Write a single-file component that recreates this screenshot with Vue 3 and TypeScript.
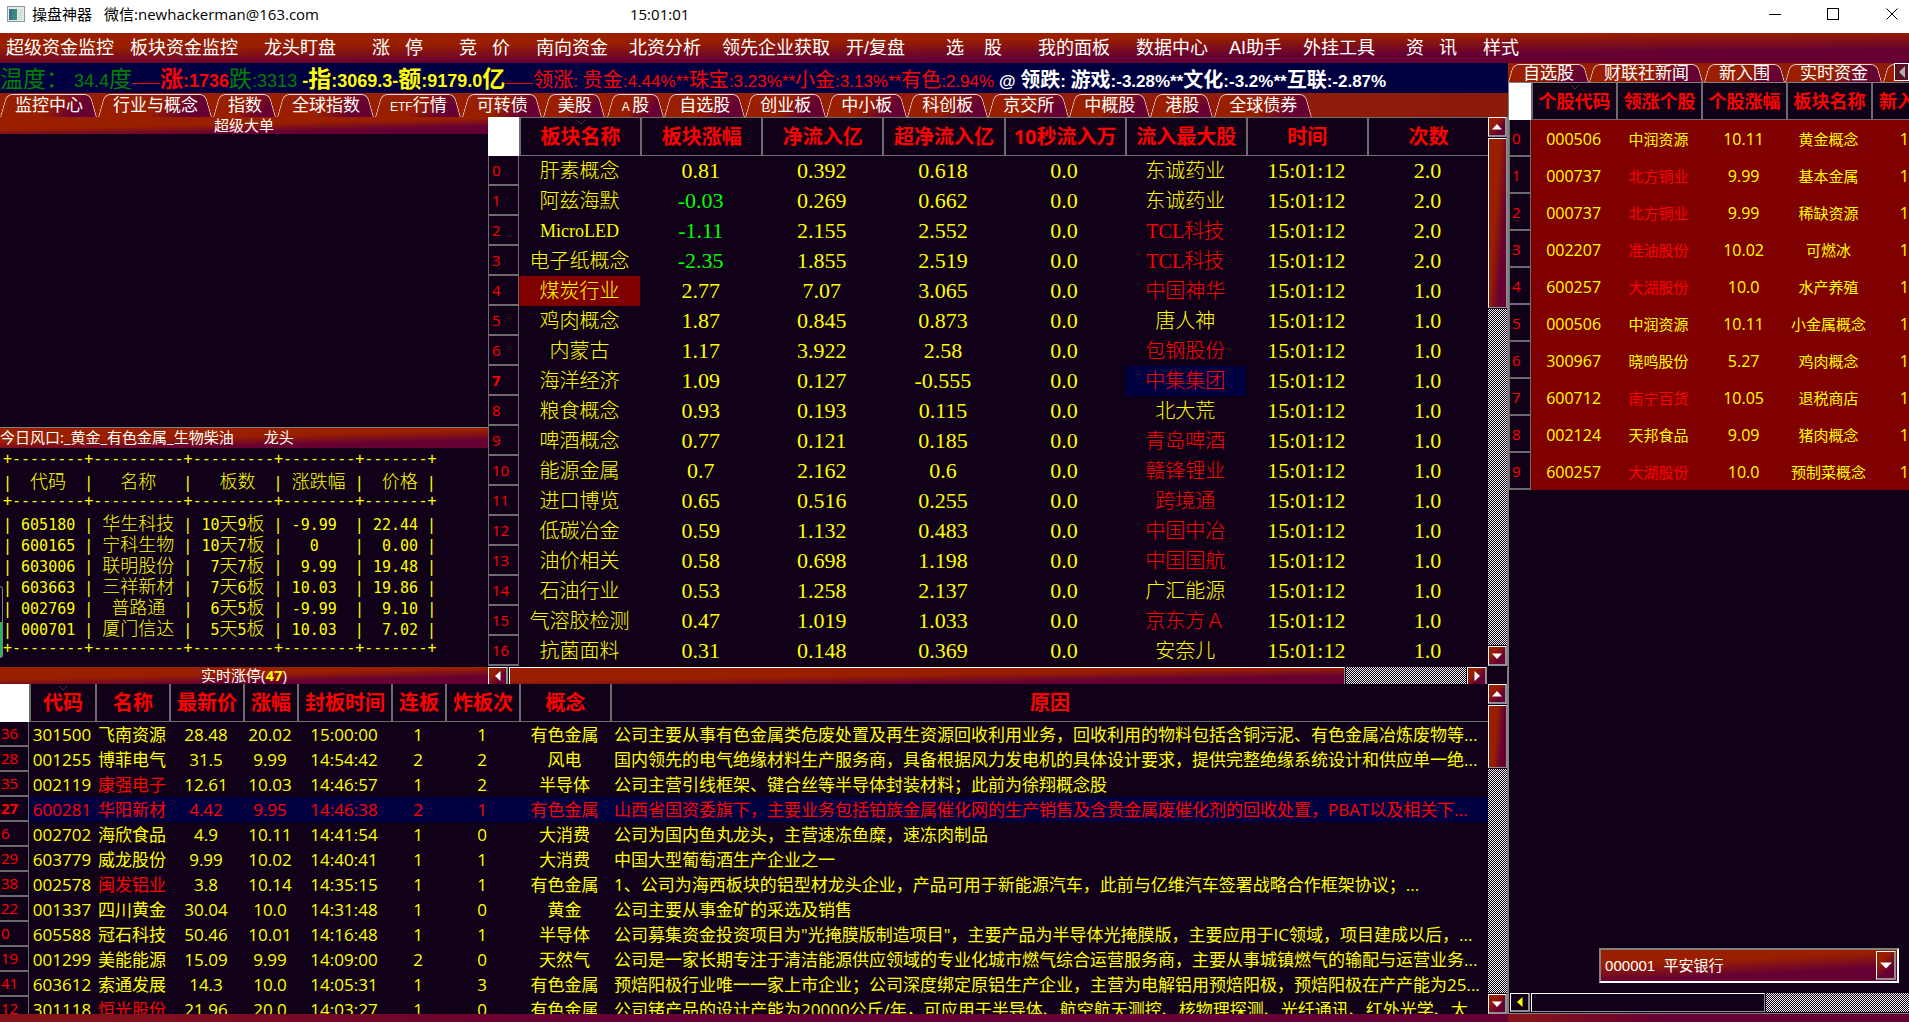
<script setup lang="ts">
import { ref } from 'vue'

interface MenuEntry { label: string; lead: number }
interface Run { text: string; han: boolean }
interface TickerPart { text: string; tone: string }
interface LimitRow { no: number; cells: string[]; reason: string; redName?: boolean; selected?: boolean }

const menu: MenuEntry[] = [
  { label: '超级资金监控', lead: 0 },
  { label: '板块资金监控', lead: 0 },
  { label: '龙头盯盘', lead: 2 },
  { label: '涨   停', lead: 4 },
  { label: '竞   价', lead: 4 },
  { label: '南向资金', lead: 2 },
  { label: '北资分析', lead: 1 },
  { label: '领先企业获取', lead: 1 },
  { label: '开/复盘', lead: 0 },
  { label: '选    股', lead: 5 },
  { label: '我的面板', lead: 4 },
  { label: '数据中心', lead: 2 },
  { label: 'AI助手', lead: 1 },
  { label: '外挂工具', lead: 1 },
  { label: '资   讯', lead: 3 },
  { label: '样式', lead: 2 },
]

const mainTabs = ['监控中心', '行业与概念', '指数', '全球指数', 'ETF行情', '可转债', '美股', 'A 股', '自选股', '创业板', '中小板', '科创板', '京交所', '中概股', '港股', '全球债券']
const sideTabs = ['自选股', '财联社新闻', '新入围', '实时资金', '　']

const ticker: TickerPart[] = [
  { text: '温度：', tone: 'green big' },
  { text: ' 34.4度', tone: 'green big' },
  { text: '——-', tone: 'red dash' },
  { text: '涨:1736', tone: 'red big bold' },
  { text: '跌:3313', tone: 'green big' },
  { text: ' -指:3069.3-额:9179.0亿', tone: 'yellow big bold' },
  { text: '——-', tone: 'red dash' },
  { text: '领涨: 贵金:4.44%**珠宝:3.23%**小金:3.13%**有色:2.94%', tone: 'red mid' },
  { text: ' @ 领跌: 游戏:-3.28%**文化:-3.2%**互联:-2.87%', tone: 'white mid bold' },
]

function runs(text: string): Run[] {
  const parts = text.match(/[\u2e80-\uffff]+|[^\u2e80-\uffff]+/g) ?? []
  return parts.map((p) => ({ text: p, han: p.charCodeAt(0) >= 0x2e80 }))
}

const hotRule = '+--------+----------+---------+--------+-------+'
const hotLines: string[] = [
  hotRule,
  '|  代码  |   名称   |   板数  | 涨跌幅 |  价格 |',
  hotRule,
  '| 605180 | 华生科技 | 10天9板 | -9.99  | 22.44 |',
  '| 600165 | 宁科生物 | 10天7板 |   0    |  0.00 |',
  '| 603006 | 联明股份 |  7天7板 |  9.99  | 19.48 |',
  '| 603663 | 三祥新材 |  7天6板 | 10.03  | 19.86 |',
  '| 002769 |  普路通  |  6天5板 | -9.99  |  9.10 |',
  '| 000701 | 厦门信达 |  5天5板 | 10.03  |  7.02 |',
  hotRule,
]

const sectorHead = ['板块名称', '板块涨幅', '净流入亿', '超净流入亿', '10秒流入万', '流入最大股', '时间', '次数']
const sectors: string[][] = [
  ['肝素概念', '0.81', '0.392', '0.618', '东诚药业', '2.0'],
  ['阿兹海默', '-0.03', '0.269', '0.662', '东诚药业', '2.0'],
  ['MicroLED', '-1.11', '2.155', '2.552', 'TCL科技', '2.0'],
  ['电子纸概念', '-2.35', '1.855', '2.519', 'TCL科技', '2.0'],
  ['煤炭行业', '2.77', '7.07', '3.065', '中国神华', '1.0'],
  ['鸡肉概念', '1.87', '0.845', '0.873', '唐人神', '1.0'],
  ['内蒙古', '1.17', '3.922', '2.58', '包钢股份', '1.0'],
  ['海洋经济', '1.09', '0.127', '-0.555', '中集集团', '1.0'],
  ['粮食概念', '0.93', '0.193', '0.115', '北大荒', '1.0'],
  ['啤酒概念', '0.77', '0.121', '0.185', '青岛啤酒', '1.0'],
  ['能源金属', '0.7', '2.162', '0.6', '赣锋锂业', '1.0'],
  ['进口博览', '0.65', '0.516', '0.255', '跨境通', '1.0'],
  ['低碳冶金', '0.59', '1.132', '0.483', '中国中冶', '1.0'],
  ['油价相关', '0.58', '0.698', '1.198', '中国国航', '1.0'],
  ['石油行业', '0.53', '1.258', '2.137', '广汇能源', '1.0'],
  ['气溶胶检测', '0.47', '1.019', '1.033', '京东方Ａ', '1.0'],
  ['抗菌面料', '0.31', '0.148', '0.369', '安奈儿', '1.0'],
]
const plainLeaders = new Set(['东诚药业', '唐人神', '北大荒', '广汇能源', '安奈儿'])

const limitHead = ['代码', '名称', '最新价', '涨幅', '封板时间', '连板', '炸板次', '概念']
const limitRows: LimitRow[] = [
  { no: 36, cells: ['301500', '飞南资源', '28.48', '20.02', '15:00:00', '1', '1', '有色金属'], reason: '公司主要从事有色金属类危废处置及再生资源回收利用业务，回收利用的物料包括含铜污泥、有色金属冶炼废物等...' },
  { no: 28, cells: ['001255', '博菲电气', '31.5', '9.99', '14:54:42', '2', '2', '风电'], reason: '国内领先的电气绝缘材料生产服务商，具备根据风力发电机的具体设计要求，提供完整绝缘系统设计和供应单一绝...' },
  { no: 35, cells: ['002119', '康强电子', '12.61', '10.03', '14:46:57', '1', '2', '半导体'], reason: '公司主营引线框架、键合丝等半导体封装材料；此前为徐翔概念股', redName: true },
  { no: 27, cells: ['600281', '华阳新材', '4.42', '9.95', '14:46:38', '2', '1', '有色金属'], reason: '山西省国资委旗下，主要业务包括铂族金属催化网的生产销售及含贵金属废催化剂的回收处置，PBAT以及相关下...', selected: true },
  { no: 6, cells: ['002702', '海欣食品', '4.9', '10.11', '14:41:54', '1', '0', '大消费'], reason: '公司为国内鱼丸龙头，主营速冻鱼糜，速冻肉制品' },
  { no: 29, cells: ['603779', '威龙股份', '9.99', '10.02', '14:40:41', '1', '1', '大消费'], reason: '中国大型葡萄酒生产企业之一' },
  { no: 38, cells: ['002578', '闽发铝业', '3.8', '10.14', '14:35:15', '1', '1', '有色金属'], reason: '1、公司为海西板块的铝型材龙头企业，产品可用于新能源汽车，此前与亿维汽车签署战略合作框架协议；...', redName: true },
  { no: 22, cells: ['001337', '四川黄金', '30.04', '10.0', '14:31:48', '1', '0', '黄金'], reason: '公司主要从事金矿的采选及销售' },
  { no: 0, cells: ['605588', '冠石科技', '50.46', '10.01', '14:16:48', '1', '1', '半导体'], reason: '公司募集资金投资项目为"光掩膜版制造项目"，主要产品为半导体光掩膜版，主要应用于IC领域，项目建成以后，...' },
  { no: 19, cells: ['001299', '美能能源', '15.09', '9.99', '14:09:00', '2', '0', '天然气'], reason: '公司是一家长期专注于清洁能源供应领域的专业化城市燃气综合运营服务商，主要从事城镇燃气的输配与运营业务...' },
  { no: 41, cells: ['603612', '索通发展', '14.3', '10.0', '14:05:31', '1', '3', '有色金属'], reason: '预焙阳极行业唯一一家上市企业；公司深度绑定原铝生产企业，主营为电解铝用预焙阳极，预焙阳极在产产能为25...' },
  { no: 12, cells: ['301118', '恒光股份', '21.96', '20.0', '14:03:27', '1', '0', '有色金属'], reason: '公司锗产品的设计产能为20000公斤/年，可应用于半导体、航空航天测控、核物理探测、光纤通讯、红外光学、太...', redName: true },
]

const sideHead = ['个股代码', '领涨个股', '个股涨幅', '板块名称']
const sideRows: string[][] = [
  ['000506', '中润资源', '10.11', '黄金概念'],
  ['000737', '北方铜业', '9.99', '基本金属'],
  ['000737', '北方铜业', '9.99', '稀缺资源'],
  ['002207', '准油股份', '10.02', '可燃冰'],
  ['600257', '大湖股份', '10.0', '水产养殖'],
  ['000506', '中润资源', '10.11', '小金属概念'],
  ['300967', '晓鸣股份', '5.27', '鸡肉概念'],
  ['600712', '南宁百货', '10.05', '退税商店'],
  ['002124', '天邦食品', '9.09', '猪肉概念'],
  ['600257', '大湖股份', '10.0', '预制菜概念'],
]
const redSide = new Set(['北方铜业', '准油股份', '大湖股份', '南宁百货'])

const activeTab = ref(0)
const activeSide = ref(2)
const stock = ref('000001')
</script>

<template>
  <div class="app">
    <header class="titlebar">
      <div class="title">
        <svg width="18" height="16" viewBox="0 0 18 16" aria-hidden="true">
          <rect x="0.5" y="0.5" width="17" height="15" fill="#e8ecee" stroke="#8d979c" />
          <rect x="2" y="3" width="8" height="11" fill="#3f8a80" />
          <rect x="2" y="3" width="3" height="11" fill="#3b6f8f" />
          <rect x="11" y="3" width="5" height="11" fill="#cfe3d8" />
        </svg>
        <span>操盘神器</span>
        <span class="contact">微信:newhackerman@163.com</span>
      </div>
      <time>15:01:01</time>
      <div class="winbtns">
        <button aria-label="最小化"><svg width="12" height="12"><path d="M0 6.5H12" stroke="#000" /></svg></button>
        <button aria-label="最大化"><svg width="12" height="12"><rect x="0.5" y="0.5" width="11" height="11" fill="none" stroke="#000" /></svg></button>
        <button aria-label="关闭" class="close"><svg width="12" height="12"><path d="M0.5 0.5L11.5 11.5M11.5 0.5L0.5 11.5" stroke="#000" /></svg></button>
      </div>
    </header>

    <nav class="menubar">
      <button v-for="m in menu" :key="m.label" :style="{ paddingLeft: m.lead * 5 + 'px' }">{{ m.label }}</button>
    </nav>

    <div class="body">
      <main class="left">
        <div class="ticker">
          <span v-for="(p, i) in ticker" :key="i" :class="p.tone"><span v-for="(r, k) in runs(p.text)" :key="k" :class="r.han ? 'han' : 'lat'">{{ r.text }}</span></span>
        </div>
        <div class="tabs" role="tablist">
          <button v-for="(t, i) in mainTabs" :key="t" role="tab" :aria-selected="i === activeTab" @click="activeTab = i"><span v-for="(r, k) in runs(t)" :key="k" :class="r.han ? 'han' : 'lat'">{{ r.text }}</span></button>
        </div>

        <div class="work">
          <section class="watch">
            <h2 class="bar">超级大单</h2>
            <div class="orders"></div>
            <h2 class="bar hotbar">今日风口:_黄金_有色金属_生物柴油<span class="lead">龙头</span></h2>
            <div class="hot">
              <span class="gauge"></span>
              <pre><span v-for="(l, i) in hotLines" :key="i" class="line"><span v-for="(r, k) in runs(l)" :key="k" :class="r.han ? 'han' : 'lat'">{{ r.text }}</span></span></pre>
            </div>
            <h2 class="bar">实时涨停(<b>47</b>)</h2>
          </section>

          <section class="sector">
            <div class="pane">
              <table class="grid sectors">
                <thead>
                  <tr>
                    <td class="corner"></td>
                    <th v-for="(h, i) in sectorHead" :key="h">
                      {{ h }}
                      <svg v-if="i === 0" class="sort" width="10" height="5"><path d="M1 0L5 4L9 0" /></svg>
                    </th>
                  </tr>
                </thead>
                <tbody>
                  <tr v-for="(s, i) in sectors" :key="i">
                    <th :class="{ strong: i === 7 }">{{ i }}</th>
                    <td :class="{ hit: i === 4, ascii: i === 2 }">{{ s[0] }}</td>
                    <td class="num" :class="{ down: s[1].startsWith('-') }">{{ s[1] }}</td>
                    <td class="num">{{ s[2] }}</td>
                    <td class="num">{{ s[3] }}</td>
                    <td class="num">0.0</td>
                    <td :class="{ up: !plainLeaders.has(s[4]), current: i === 7 }">{{ s[4] }}</td>
                    <td class="num">15:01:12</td>
                    <td class="num">{{ s[5] }}</td>
                  </tr>
                </tbody>
              </table>
              <div class="vscroll">
                <button aria-label="向上"><svg width="10" height="6"><path d="M0 5.5L5 0L10 5.5Z" /></svg></button>
                <div class="thumb t-sector"></div>
                <div class="track"></div>
                <button aria-label="向下"><svg width="10" height="6"><path d="M0 0.5L5 6L10 0.5Z" /></svg></button>
              </div>
            </div>
            <div class="hscroll">
              <button aria-label="向左"><svg width="6" height="10"><path d="M5.5 0L0 5L5.5 10Z" /></svg></button>
              <div class="thumb"></div>
              <div class="track"></div>
              <button aria-label="向右"><svg width="6" height="10"><path d="M0.5 0L6 5L0.5 10Z" /></svg></button>
              <span class="gap"></span>
            </div>
          </section>
        </div>

        <section class="limits">
          <div class="clip">
            <table class="grid limit">
              <colgroup>
                <col class="c29" /><col class="c66" /><col class="c74" /><col class="c74" /><col class="c54" /><col class="c94" /><col class="c54" /><col class="c74" /><col class="c91" /><col />
              </colgroup>
              <thead>
                <tr>
                  <td class="corner"></td>
                  <th v-for="(h, i) in limitHead" :key="h">
                    {{ h }}
                    <svg v-if="i === 0" class="sort" width="10" height="5"><path d="M1 0L5 4L9 0" /></svg>
                  </th>
                  <th>原因</th>
                </tr>
              </thead>
              <tbody>
                <tr v-for="r in limitRows" :key="r.no" :class="{ selected: r.selected }">
                  <th :class="{ strong: r.selected }">{{ r.no }}</th>
                  <td v-for="(c, k) in r.cells" :key="k" :class="{ up: r.redName && k === 1 }">{{ c }}</td>
                  <td class="reason">{{ r.reason }}</td>
                </tr>
              </tbody>
            </table>
          </div>
          <div class="vscroll">
            <button aria-label="向上"><svg width="10" height="6"><path d="M0 5.5L5 0L10 5.5Z" /></svg></button>
            <div class="thumb t-limit"></div>
            <div class="track"></div>
            <button aria-label="向下"><svg width="10" height="6"><path d="M0 0.5L5 6L10 0.5Z" /></svg></button>
          </div>
        </section>
        <footer class="foot"></footer>
      </main>

      <aside class="right">
        <div class="tabs side" role="tablist">
          <button v-for="(t, i) in sideTabs" :key="t" role="tab" :aria-selected="i === activeSide" @click="activeSide = i"><span class="han">{{ t }}</span></button>
          <button class="more" aria-label="更多"><svg width="6" height="12"><path d="M6 0L0 6L6 12Z" /></svg></button>
        </div>
        <div class="sidebody">
          <table class="grid picks">
            <colgroup>
              <col class="c22" /><col class="c85" /><col class="c85" /><col class="c85" /><col class="c85" /><col />
            </colgroup>
            <thead>
              <tr>
                <td class="corner"></td>
                <th v-for="(h, i) in sideHead" :key="h">
                  {{ h }}
                  <svg v-if="i === 0" class="sort" width="10" height="5"><path d="M1 0L5 4L9 0" /></svg>
                </th>
                <th class="cut">新入</th>
              </tr>
            </thead>
            <tbody>
              <tr v-for="(s, i) in sideRows" :key="i">
                <th>{{ i }}</th>
                <td class="num">{{ s[0] }}</td>
                <td :class="{ up: redSide.has(s[1]) }">{{ s[1] }}</td>
                <td class="num">{{ s[2] }}</td>
                <td>{{ s[3] }}</td>
                <td class="num tail">1</td>
              </tr>
            </tbody>
          </table>
          <div class="combo">
            <select v-model="stock" aria-label="股票">
              <option value="000001">000001&nbsp; 平安银行</option>
            </select>
            <span class="drop"><svg width="12" height="7"><path d="M0 0.5L6 6.5L12 0.5Z" /></svg></span>
          </div>
        </div>
        <div class="hscroll dark">
          <button aria-label="向左"><svg width="6" height="10"><path d="M5.5 0L0 5L5.5 10Z" /></svg></button>
          <div class="thumb"></div>
          <div class="track"></div>
        </div>
        <footer class="foot"></footer>
      </aside>
    </div>
  </div>
</template>

<style>
body {
  background: #100018;
  overflow: hidden;
}
</style>

<style scoped>
* {
  box-sizing: border-box;
}
.app {
  height: 100vh;
  display: flex;
  flex-direction: column;
  font-family: "Open Sans", "Noto Sans CJK SC", sans-serif;
  background: #100018;
  color: #fff;
}
button {
  font: inherit;
  color: inherit;
  border: 0;
  margin: 0;
  padding: 0;
  background: none;
}
.titlebar {
  height: 33px;
  flex: none;
  display: grid;
  grid-template-columns: 33% 1fr auto;
  align-items: center;
  background: #fff;
  color: #000;
  font-size: 15px;
  line-height: 26px;
  padding-bottom: 6px;
}
.title {
  display: flex;
  align-items: center;
  padding-left: 7px;
  gap: 7px;
}
.contact {
  margin-left: 5px;
}
.winbtns {
  display: flex;
}
.winbtns button {
  width: 58px;
  height: 27px;
  display: grid;
  place-items: center;
}
.winbtns .close {
  width: 35px;
  margin-left: 12px;
}
.menubar {
  height: 30px;
  flex: none;
  display: flex;
  gap: 16px;
  padding-left: 6px;
  white-space: pre;
  font-family: "Liberation Sans", "Noto Sans CJK SC", sans-serif;
  font-size: 18px;
  line-height: 30px;
  background: linear-gradient(179.5deg, #991f00 32%, #660033 72%);
}
.menubar button {
  white-space: pre;
}
.body {
  flex: 1;
  min-height: 0;
  display: grid;
  grid-template-columns: minmax(0, 79fr) minmax(0, 21fr);
}
.left,
.right {
  display: flex;
  flex-direction: column;
  min-height: 0;
  min-width: 0;
}

/* quote ticker */
.ticker {
  height: 30px;
  flex: none;
  display: flex;
  align-items: baseline;
  background: #000040;
  white-space: pre;
  line-height: 28px;
}
.ticker .han {
  font-family: "Noto Sans CJK SC", sans-serif;
}
.ticker .lat {
  font-family: "Liberation Sans Narrow", "Liberation Sans", sans-serif;
}
.big .han { font-size: 23px; }
.big .lat { font-size: 18px; }
.mid .han { font-size: 20px; }
.mid .lat { font-size: 17px; }
.dash { font-size: 12px; }
.bold { font-weight: 700; }
.green { color: #008000; }
.red { color: #f00; }
.yellow { color: #ff0; }
.white { color: #fff; }

/* slanted tabs */
.tabs {
  height: 24px;
  flex: none;
  display: flex;
  overflow-x: clip;
  font-size: 17px;
  line-height: 24px;
  background: linear-gradient(90deg, #991f00 40%, #8c1a0d);
}
.tabs button {
  position: relative;
  z-index: 0;
  flex: none;
  padding: 0 15px;
  white-space: pre;
}
.tabs button::before,
.tabs button::after {
  content: "";
  position: absolute;
  z-index: -1;
  top: 1px;
  bottom: 0;
  border-top: 1px solid #f0d8d8;
}
.tabs button::before {
  left: 0;
  right: 40%;
  border-left: 1px solid #f0d8d8;
  border-top-left-radius: 6px;
  transform: skewX(-16deg);
  transform-origin: bottom;
  background: #991f00;
}
.tabs button::after {
  left: 40%;
  right: 1px;
  border-right: 1px solid #f0d8d8;
  border-top-right-radius: 6px;
  transform: skewX(16deg);
  transform-origin: bottom;
  background: linear-gradient(140deg, #991f00 30%, #660033 70%);
}
.tabs .lat {
  font-family: "Liberation Sans Narrow", "Liberation Sans", sans-serif;
  font-size: 12px;
}
.tabs.side {
  height: 19px;
  line-height: 20px;
  position: relative;
}
.tabs.side .more {
  position: absolute;
  right: 0;
  top: 0;
  width: 15px;
  height: 18px;
  padding: 0;
  z-index: 1;
  border: 1px solid #fff;
  background: #5a1020;
  display: grid;
  place-items: center;
}
.tabs .more::before,
.tabs .more::after {
  display: none;
}
.more path {
  fill: #b0b0b0;
}

/* upper workspace */
.work {
  flex: none;
  display: grid;
  grid-template-columns: minmax(0, 488fr) minmax(0, 1020fr);
}
.watch {
  display: flex;
  flex-direction: column;
}
.bar {
  margin: 0;
  height: 17px;
  flex: none;
  text-align: center;
  font-size: 15px;
  font-weight: 400;
  line-height: 16px;
  white-space: pre;
  background: linear-gradient(178.6deg, #991f00 44%, #660033 75%);
}
.bar b {
  color: #ff0;
}
.orders {
  flex: 1;
}
.hotbar {
  height: 21px;
  line-height: 19px;
  text-align: left;
  border-top: 1px solid #808080;
}
.lead {
  margin-left: 30px;
}
.hot {
  position: relative;
  height: 219px;
  flex: none;
  padding-top: 1px;
}
.hot pre {
  margin: 0;
  padding-left: 3px;
  color: #ff0;
  font-family: "DejaVu Sans Mono", monospace;
  font-size: 15px;
}
.line {
  display: flex;
  align-items: baseline;
  height: 21px;
  line-height: 21px;
}
.hot .han {
  font-family: "Noto Sans CJK SC", sans-serif;
  font-size: 18px;
  font-weight: 300;
}
.gauge {
  position: absolute;
  left: 0;
  top: 138px;
  width: 3px;
  height: 72px;
  border: 1px solid #808080;
  border-left: 0;
  border-radius: 0 3px 3px 0;
  background: linear-gradient(#100018 50%, #2bb55b 50%);
}

/* tables */
.grid {
  width: 100%;
  table-layout: fixed;
  border-collapse: separate;
  border-spacing: 0;
}
.grid th,
.grid td {
  padding: 0;
  text-align: center;
  white-space: nowrap;
  color: #ff0;
}
.grid th {
  position: relative;
  color: #f00;
}
.grid thead th {
  border-left: 2px solid #6c6c6c;
  border-bottom: 1px solid #6c6c6c;
}
.grid .corner {
  background: #fff;
}
.grid tbody th {
  font-weight: 400;
  text-align: left;
  padding-left: 3px;
  border: 1px solid #6c6c6c;
  border-bottom-width: 2px;
  border-top: 0;
}
.grid tbody th.strong {
  font-weight: 700;
}
.grid td.up {
  color: #f00;
}
.grid td.down {
  color: #0f0;
}
.sort {
  position: absolute;
  left: 50%;
  top: 2px;
  margin-left: -5px;
}
.sort path {
  fill: none;
  stroke: #3c3440;
}
.sector {
  display: flex;
  flex-direction: column;
}
.pane {
  display: flex;
}
.sectors .corner {
  width: 31px;
}
.sectors thead th {
  height: 39px;
  font-size: 20px;
  line-height: 36px;
  border-top: 1px solid #6c6c6c;
}
.sectors tbody th {
  height: 30px;
  font-size: 15px;
  line-height: 28px;
}
.sectors td {
  font-family: "Liberation Serif", "Noto Sans CJK SC", serif;
  font-size: 20px;
  font-weight: 300;
  line-height: 28px;
}
.sectors td.num {
  font-size: 22px;
}
.sectors td.ascii {
  font-size: 18px;
}
.sectors td.hit {
  background: #800000;
}
.sectors td.current {
  background: #000040;
}

/* scroll bars */
.vscroll {
  width: 20px;
  flex: none;
  display: flex;
  flex-direction: column;
  gap: 1px;
  border-right: 1px solid #808080;
}
.vscroll button,
.hscroll button,
.drop {
  flex: none;
  display: grid;
  place-items: center;
  border: 1px solid #fff;
  border-right: 2px solid #909090;
  border-bottom: 2px solid #909090;
  background: linear-gradient(135deg, #991f00 30%, #660033 70%);
}
.vscroll button {
  height: 20px;
}
.vscroll path,
.hscroll path,
.drop path {
  fill: #fff;
}
.thumb {
  flex: none;
  border: 1px solid #fff;
  border-right-color: #909090;
  border-bottom-color: #909090;
}
.vscroll .thumb {
  background: linear-gradient(94deg, #991f00 40%, #660033 75%);
}
.t-sector {
  height: 31%;
}
.t-limit {
  height: 19%;
}
.track {
  flex: 1;
  background: repeating-conic-gradient(#f4f4f4 0 25%, #100018 0 50%) 0 0 / 2px 2px;
}
.hscroll {
  height: 18px;
  flex: none;
  display: flex;
  gap: 1px;
  padding-top: 1px;
}
.hscroll button {
  width: 20px;
}
.hscroll .thumb {
  width: 82%;
  background: linear-gradient(179deg, #991f00 45%, #660033 75%);
}
.sector .hscroll button,
.sector .hscroll .thumb {
  border-bottom: 0;
}
.gap {
  width: 20px;
  border-right: 1px solid #808080;
}

/* limit-up list */
.limits {
  flex: 1;
  min-height: 0;
  display: flex;
  overflow: hidden;
}
.clip {
  flex: 1;
  min-width: 0;
  overflow: hidden;
}
.c22 { width: 22px; }
.c29 { width: 29px; }
.c54 { width: 54px; }
.c66 { width: 66px; }
.c74 { width: 74px; }
.c85 { width: 85px; }
.c91 { width: 91px; }
.c94 { width: 94px; }
.limit thead th {
  height: 38px;
  font-size: 20px;
  line-height: 36px;
}
.limit tbody th {
  height: 25px;
  font-size: 15px;
  line-height: 23px;
  padding-left: 1px;
  border-left: 0;
}
.limit td {
  font-size: 17px;
  line-height: 25px;
}
.limit td.reason {
  text-align: left;
  padding-left: 4px;
}
.limit .selected td {
  color: #f00;
  background: #000040;
}
.foot {
  height: 8px;
  flex: none;
  background: linear-gradient(90deg, #86121a 5%, #660033 38%);
}

/* right column */
.sidebody {
  flex: 1;
  min-height: 0;
  display: flex;
  flex-direction: column;
  overflow-x: clip;
  border-left: 1px solid #808080;
  border-top: 1px solid #808080;
}
.picks tbody td {
  background: #800000;
}
.picks thead th {
  height: 37px;
  font-size: 18px;
  line-height: 34px;
}
.picks tbody th {
  height: 37px;
  font-size: 15px;
  line-height: 34px;
  padding-left: 2px;
}
.picks td {
  font-size: 15px;
}
.picks td.num {
  font-size: 16px;
}
.picks th.cut {
  text-align: left;
  padding-left: 6px;
}
.picks td.tail {
  text-align: right;
}
.combo {
  position: relative;
  margin: auto 10px 9px 90px;
}
.combo select {
  display: block;
  width: 100%;
  height: 35px;
  appearance: none;
  border: 2px solid #808080;
  border-right-color: #fff;
  border-bottom-color: #fff;
  border-radius: 0;
  padding: 0 4px;
  color: #fff;
  font-family: "Liberation Sans", "Noto Sans CJK SC", sans-serif;
  font-size: 15px;
  background: linear-gradient(177.2deg, #991f00 35%, #660033 70%);
}
.drop {
  position: absolute;
  right: 3px;
  top: 3px;
  width: 20px;
  height: 29px;
  pointer-events: none;
}
.hscroll.dark {
  height: 22px;
  padding: 1px 0 1px 1px;
  border-bottom: 1px solid #808080;
  border-left: 1px solid #808080;
}
.hscroll.dark .thumb {
  width: 234px;
  background: #100018;
}
.hscroll.dark button {
  background: #100018;
}
.dark path {
  fill: #ff0;
}
</style>
